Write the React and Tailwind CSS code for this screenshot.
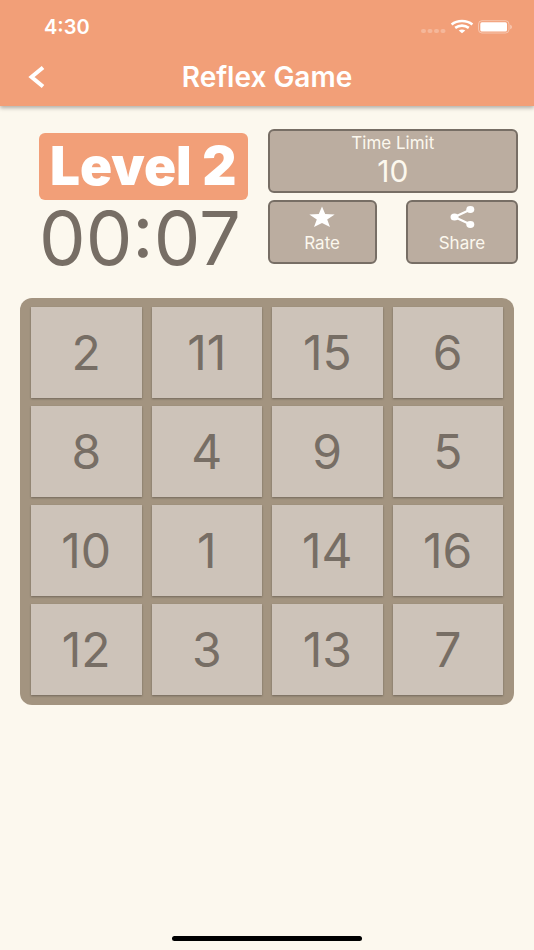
import React from "react";

const tiles = [2, 11, 15, 6, 8, 4, 9, 5, 10, 1, 14, 16, 12, 3, 13, 7];

function StatusBar() {
  return (
    <div className="flex h-[53px] items-center justify-between pl-11 pr-[22px]">
      <span className="text-[20px] leading-6 font-semibold">4:30</span>
      <svg width="92" height="16" viewBox="0 0 92 16" fill="#fff" aria-hidden="true">
        <g opacity="0.25">
          <rect x="1" y="10" width="5" height="4" rx="2" />
          <rect x="7.5" y="10" width="5" height="4" rx="2" />
          <rect x="14" y="10" width="5" height="4" rx="2" />
          <rect x="20.5" y="10" width="5" height="4" rx="2" />
        </g>
        <g fill="none" stroke="#fff" strokeWidth="2.6">
          <path d="M31.600 5.500C37.500 .9 46.500 .9 52.400 5.500" />
          <path d="M35.200 8.900C39.200 5.900 44.800 5.900 48.800 8.900" />
        </g>
        <path d="M38.700 11.500C40.700 10 43.300 10 45.300 11.500L42 14.200Z" />
        <rect x="58.500" y="1.700" width="30.500" height="12.300" rx="3.500" fill="none" stroke="#fff" strokeOpacity="0.4" />
        <rect x="60.300" y="3.300" width="26.700" height="9.200" rx="1.600" />
        <path d="M90.300 5.800c2 .7 2 3.700 0 4.500z" opacity="0.5" />
      </svg>
    </div>
  );
}

function Header() {
  return (
    <header className="relative z-10 h-[106px] bg-[#f29f78] text-white shadow-[0_2px_4px_rgba(0,0,0,0.3)]">
      <StatusBar />
      <div className="grid h-12 grid-cols-[72px_1fr_72px] items-center">
        <button type="button" aria-label="Back" className="flex h-12 items-center pl-7">
          <svg width="18" height="24" viewBox="0 0 18 24" fill="none" stroke="#fff" strokeWidth="4">
            <path d="M15 2.500L3.500 12L15 21.500" />
          </svg>
        </button>
        <h1 className="text-center text-[28px] leading-8 font-semibold">Reflex Game</h1>
      </div>
    </header>
  );
}

function ActionButton({ label, className, children }) {
  return (
    <button
      type="button"
      className={`flex h-16 flex-col items-center gap-px rounded-md border-2 border-[#776e65] bg-[#bbada0] pt-1 text-[17px] leading-6 text-[#fcf8ee] ${className}`}
    >
      {children}
      <span>{label}</span>
    </button>
  );
}

export default function App() {
  return (
    <div className="flex min-h-screen flex-col bg-[#fcf8ee] font-['Inter',sans-serif]">
      <Header />
      <main className="flex-1">
        <section className="grid grid-cols-[5fr_6fr] gap-x-5 pt-[23px] pr-4 pl-[39px]">
          <div className="flex flex-col pt-1">
            <h2 className="flex h-[67px] items-center justify-center rounded-md bg-[#f29f78] text-[53px] leading-none font-black whitespace-nowrap text-white">
              Level 2
            </h2>
            <div className="flex h-[76px] items-center text-[74px] leading-none whitespace-nowrap text-[#776e65]">
              00:07
            </div>
          </div>
          <div className="flex flex-col gap-[7px]">
            <div className="flex h-16 flex-col items-center rounded-md border-2 border-[#776e65] bg-[#bbada0] text-[#fcf8ee]">
              <span className="text-[17px] leading-6">Time Limit</span>
              <span className="text-[30px] leading-8">10</span>
            </div>
            <div className="flex justify-between">
              <ActionButton label="Rate" className="w-[109px]">
                <svg width="28" height="24" viewBox="0 0 28 24" fill="#fff" aria-hidden="true">
                  <path d="M14 .5L17.200 8L26.700 8.500L19.200 13.500L22 21L14 16.900L6 21L8.800 13.500L1.300 8.500L10.800 8Z" />
                </svg>
              </ActionButton>
              <ActionButton label="Share" className="w-28">
                <svg width="28" height="24" viewBox="0 0 28 24" fill="#fff" aria-hidden="true">
                  <path d="M22 3.700L6.500 11L22 18.300" fill="none" stroke="#fff" strokeWidth="2.200" />
                  <ellipse cx="22.300" cy="3.500" rx="4" ry="3.400" />
                  <ellipse cx="6.500" cy="11" rx="4" ry="3.500" />
                  <ellipse cx="22.300" cy="18.500" rx="4" ry="3.400" />
                </svg>
              </ActionButton>
            </div>
          </div>
        </section>
        <section
          aria-label="Number board"
          className="mx-5 mt-[22px] grid grid-cols-4 gap-x-[10px] gap-y-2 rounded-xl bg-[#a39480] px-[11px] pt-[9px] pb-[10px]"
        >
          {tiles.map((n) => (
            <button
              key={n}
              type="button"
              className="flex h-[91px] items-center justify-center bg-[#cdc3b9] text-[48px] leading-none text-[#776e65] shadow-[0_1px_2px_rgba(0,0,0,0.3)]"
            >
              {n}
            </button>
          ))}
        </section>
      </main>
      <footer className="flex justify-center pb-[9px]">
        <div className="h-[5px] w-[190px] rounded-full bg-black" />
      </footer>
    </div>
  );
}
